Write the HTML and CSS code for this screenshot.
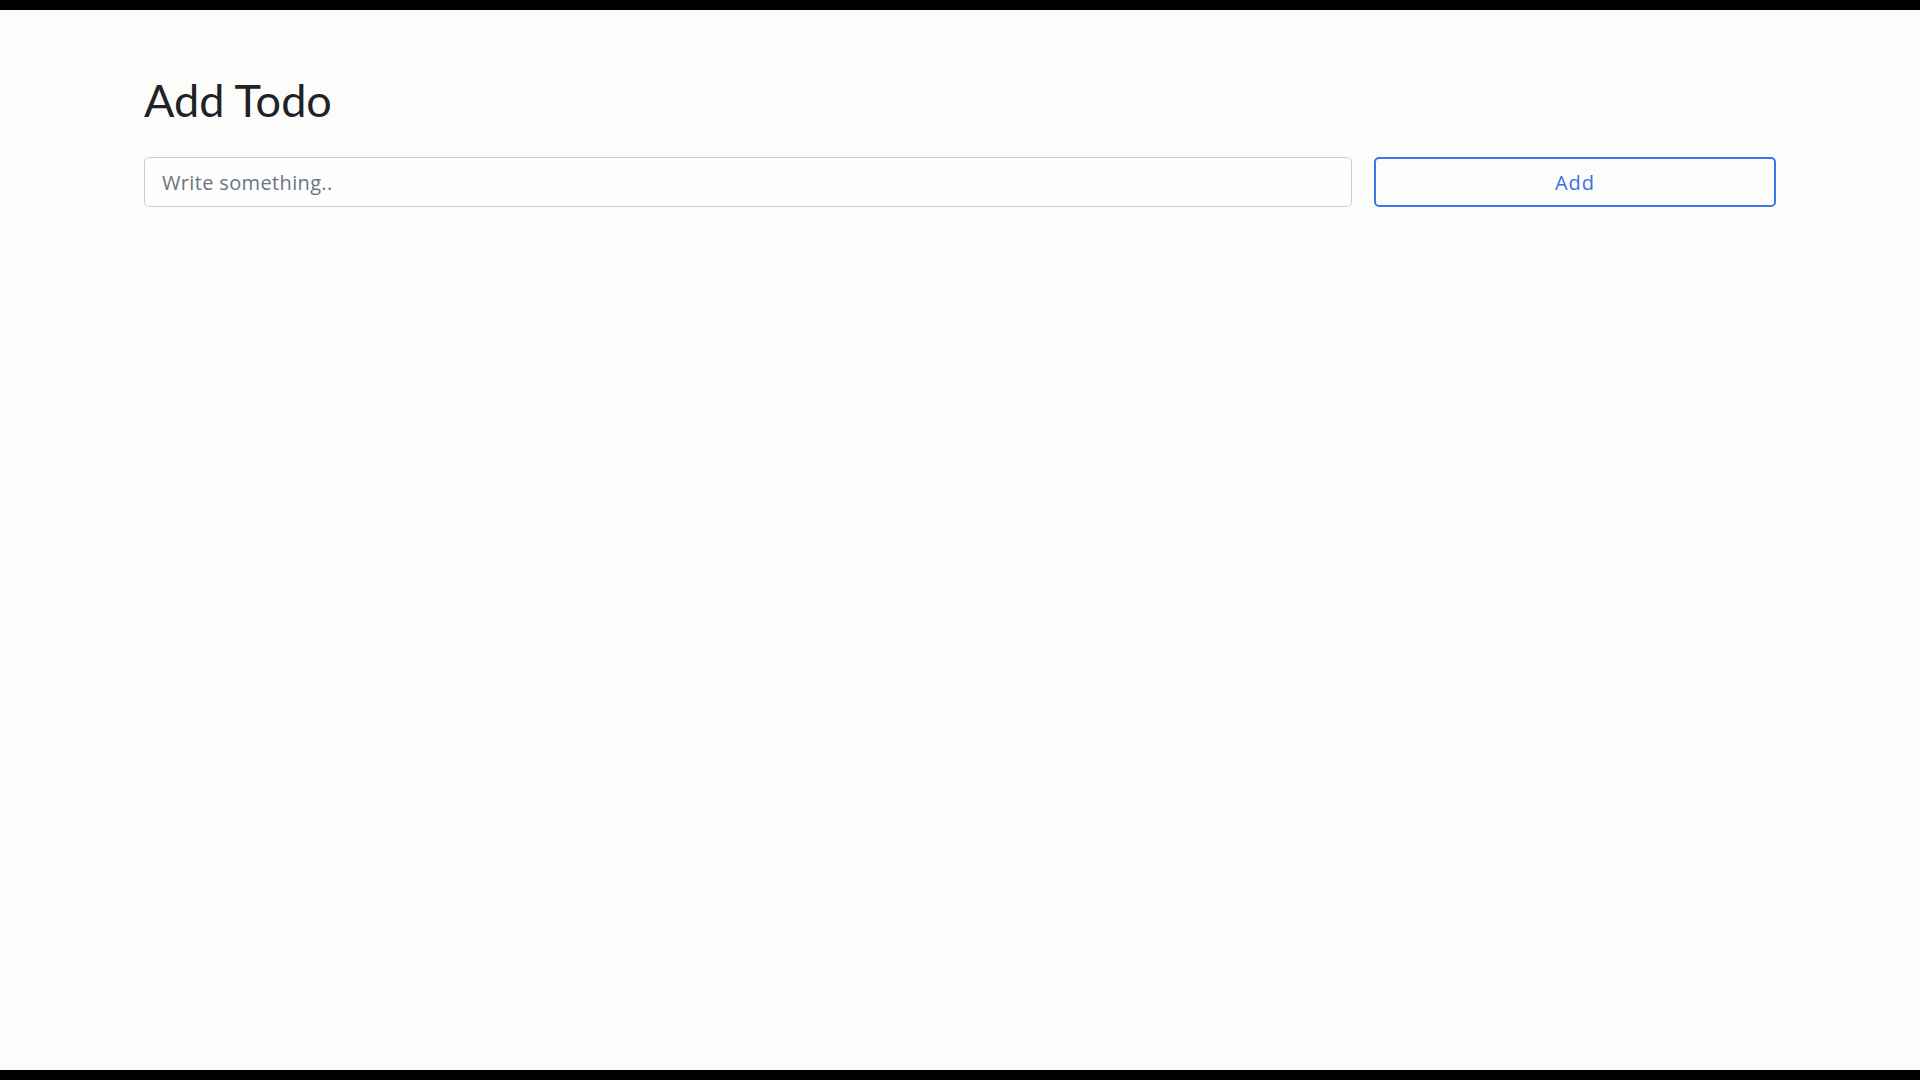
FILE: index.html
```html
<!DOCTYPE html>
<html lang="en">
<head>
<meta charset="utf-8">
<title>Add Todo</title>
<link rel="stylesheet" href="styles.css">
</head>
<body>
<div class="frame">
  <div class="bar"></div>
  <main class="page">
    <h1 class="title">Add Todo</h1>
    <form class="add-row">
      <input class="todo-input" type="text" placeholder="Write something..">
      <button class="add-btn" type="button">Add</button>
    </form>
  </main>
  <div class="bar"></div>
</div>
</body>
</html>
```
FILE: styles.css
```css
* { box-sizing: border-box; }
html, body { margin: 0; padding: 0; }
body {
  font-family: "Lato", "Open Sans", "Noto Sans", sans-serif;
  color: #212529;
  background: #000;
}
.frame {
  height: 1080px;
  display: flex;
  flex-direction: column;
  background: #fcfcfa;
}
.bar {
  height: 10px;
  background: #000;
  flex: none;
}
.page {
  flex: 1;
  padding: 63px 144px 0 144px;
}
.title {
  margin: 0 0 30px 0;
  font-size: 45px;
  line-height: 1.2;
  font-weight: 400;
  color: #1f2328;
}
.add-row {
  display: grid;
  grid-template-columns: 1fr 402px;
  column-gap: 22px;
  margin: 0;
}
.todo-input {
  height: 50px;
  padding: 0 17px;
  font-family: "Open Sans", "Lato", sans-serif;
  font-size: 20px;
  letter-spacing: 0.35px;
  color: #495057;
  background: #fdfdfd;
  border: 1px solid #c9ced6;
  border-radius: 5px;
  outline: none;
}
.todo-input::placeholder { color: #6c757d; }
.add-btn {
  height: 50px;
  font-family: "Open Sans", "Lato", sans-serif;
  font-size: 20px;
  letter-spacing: 1px;
  color: #3d6fe3;
  background: transparent;
  border: 2px solid #3a78e8;
  border-radius: 5px;
  cursor: pointer;
}
```
